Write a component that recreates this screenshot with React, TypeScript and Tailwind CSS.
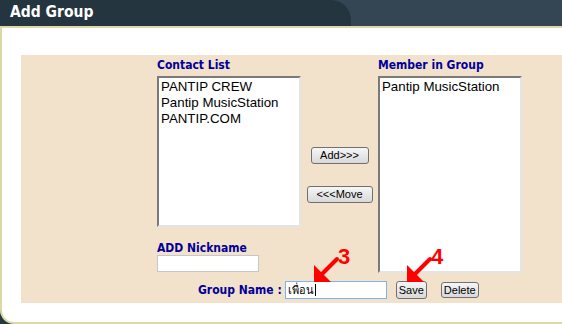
import React from 'react'

const label = "font-['DejaVu_Sans_Condensed','DejaVu_Sans',sans-serif] font-bold text-[#000099]"
const winBtn =
  "flex items-center justify-center rounded-[3px] border border-[#707070] bg-gradient-to-b from-[#f6f6f6] to-[#d9d9d9] font-['Liberation_Sans',Arial,sans-serif] text-[11px] leading-none text-black"

function ListBox({ items, height }: { items: string[]; height: string }) {
  return (
    <div
      className={`w-[144px] ${height} border-2 border-t-[#7a7a7a] border-l-[#7a7a7a] border-r-[#e4e4e4] border-b-[#e4e4e4] bg-white pl-[2px] pt-[1px] font-['Liberation_Sans',Arial,sans-serif] text-[13.3px] leading-[16px] text-black`}
    >
      {items.map((it) => (
        <div key={it}>{it}</div>
      ))}
    </div>
  )
}

function Arrow({ x, y, n }: { x: number; y: number; n: string }) {
  // x,y = tail of the arrow
  return (
    <g>
      <line x1={x} y1={y} x2={x - 17} y2={y + 17} stroke="#ff0000" strokeWidth="4" strokeLinecap="round" />
      <polygon points={`${x - 23},${y + 23} ${x - 23},${y + 6} ${x - 6},${y + 23}`} fill="#ff0000" />
      <text
        x={x + 1}
        y={y + 5}
        fill="#ff0000"
        fontSize="22"
        fontWeight="bold"
        fontFamily="'Liberation Sans', Arial, sans-serif"
      >
        {n}
      </text>
    </g>
  )
}

export default function App() {
  return (
    <div className="relative h-[324px] w-[562px] overflow-hidden bg-[#263744]">
      {/* Title bar */}
      <div className="flex h-[26px] bg-[#344653]">
        <div className="flex w-[351px] items-center rounded-tr-[20px] bg-[#25353f] pl-[10px]">
          <span className="font-['DejaVu_Sans_Condensed','DejaVu_Sans',sans-serif] text-[15.5px] font-bold text-white">
            Add Group
          </span>
        </div>
      </div>

      {/* Panel */}
      <div className="h-[298px] rounded-bl-[14px] border-b-2 border-l-2 border-t-2 border-[#dcd8aa] bg-white pl-[19px] pt-[27px]">
        <div className="h-[248px] bg-[#f3e2cb] pl-[136px] pt-[2px]">
          <div className="flex">
            {/* Contact list column */}
            <div className="flex w-[144px] flex-col">
              <div className={`${label} h-[19px] text-[12px] leading-[16px]`}>Contact List</div>
              <ListBox items={['PANTIP CREW', 'Pantip MusicStation', 'PANTIP.COM']} height="h-[151px]" />
              <div className={`${label} mt-[13px] h-[15px] text-[12px] leading-[16px]`}>ADD Nickname</div>
              <div className="h-[17px] w-[102px] border border-[#c4c8cc] bg-white" />
            </div>

            {/* Move buttons */}
            <div className="flex w-[77px] flex-col items-center pt-[90px]">
              <button className={`${winBtn} h-[17px] w-[58px]`}>Add&gt;&gt;&gt;</button>
              <button className={`${winBtn} mt-[22px] h-[17px] w-[66px]`}>&lt;&lt;&lt;Move</button>
            </div>

            {/* Member column */}
            <div className="flex w-[144px] flex-col">
              <div className={`${label} h-[19px] text-[12px] leading-[16px]`}>Member in Group</div>
              <ListBox items={['Pantip MusicStation']} height="h-[197px]" />
            </div>
          </div>

          {/* Group name row */}
          <div className="mt-[8px] flex h-[18px] items-center pl-[41px]">
            <span className={`${label} text-[12px] leading-[18px]`}>Group Name :</span>
            <div className="ml-[3px] flex h-[18px] w-[102px] items-center border border-[#7eb4ea] bg-white pl-[2px] font-['Liberation_Sans',Arial,sans-serif] text-[11px] text-black">
              เพื่อน<span className="ml-[1px] inline-block h-[12px] w-px bg-black" />
            </div>
            <button className={`${winBtn} ml-[9px] h-[18px] w-[31px] border-[#3c7fb1] from-[#eaf6fd] to-[#a9daf5]`}>
              Save
            </button>
            <button className={`${winBtn} ml-[14px] h-[16px] w-[38px]`}>Delete</button>
          </div>
        </div>
      </div>

      {/* Annotations */}
      <svg className="pointer-events-none absolute inset-0" width="562" height="324">
        <Arrow x={337} y={259} n="3" />
        <Arrow x={430} y={259} n="4" />
      </svg>
    </div>
  )
}
